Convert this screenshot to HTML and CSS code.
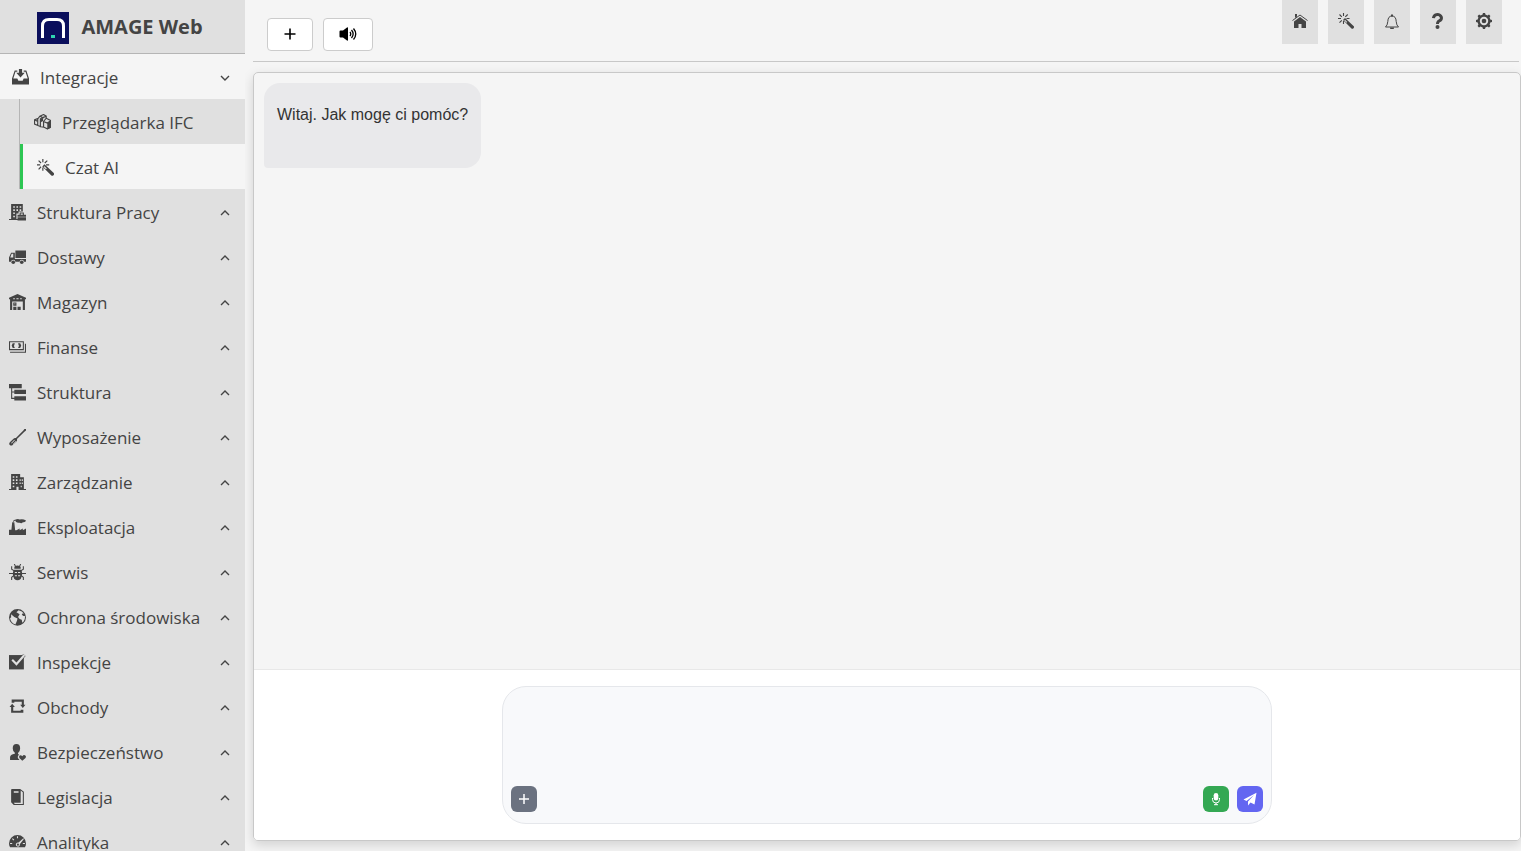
FILE: index.html
```html
<!DOCTYPE html>
<html lang="pl">
<head>
    <meta charset="UTF-8">
    <meta name="viewport" content="width=device-width, initial-scale=1.0">
    <title>AMAGE Web</title>
    <link rel="stylesheet" href="styles.css">
</head>
<body>
    <aside class="sidebar">
        <div class="brand">
            <svg class="brand-logo" viewBox="0 0 32 32">
                <rect width="32" height="32" fill="#0b0f5c"/>
                <path d="M5.500 26V14Q5.500 7.500 12 7.500H20Q26.500 7.500 26.500 14V26" fill="none" stroke="#fff" stroke-width="3"/>
                <rect x="14" y="23" width="4" height="3" fill="#2ed3b0"/>
            </svg>
            <span>AMAGE Web</span>
        </div>

        <nav class="menu">
            <button class="menu-item open" aria-expanded="true">
                <svg class="icon" viewBox="0 0 16 16"><path d="M6.500 0h3v3.500H12L8 8 4 3.500h2.500zM2.500 1.500H5v1H3.300L1.200 9H5l1 2h4l1-2h3.800L12.700 2.500H11v-1h2.500L16 9v5.500H0V9z"/></svg>
                <span>Integracje</span>
                <svg class="chevron" viewBox="0 0 10 10"><path d="M1 3l4 4 4-4"/></svg>
            </button>
            <div class="submenu">
                <a class="menu-item" href="#">
                    <svg class="icon" viewBox="0 0 16 16"><path d="M.5 5.500L4 4l1.500-2L9 .5l2.500 1.500v2l4 2v6.500l-3 1.500-3-1.500-3-.5-6-2.500zM.5 5.500L3.500 7v4M3.500 7V4.500M6 8V4.500L9 3v1M6 8v4.500M9 12.500V7l2.500-3M9 7l3.500 1.500 3-2M5.500 2L8.500 3.500l3-1.500" fill="none" stroke="currentColor" stroke-width="1.100"/><path d="M12.500 8.500l3-2v6.500l-3 1.500zM6 5l2.500-1.500v3L6 8z"/></svg>
                    <span>Przeglądarka IFC</span>
                </a>
                <a class="menu-item active" href="#">
                    <svg class="icon" viewBox="0 0 16 16"><path d="M7 5L5 7l8.500 8.500q1 .7 2-.3t.3-2zM7 6.800L9.200 9l-.7.700L6.300 7.500z" fill-rule="evenodd"/><path d="M5.500 0v3M5.500 8v3M0 5.500h3M8.500 5.500h3M1.500 1.500l2.300 2.300M9.700 1.500L7.300 3.800M1.500 9.700l2.300-2.400" fill="none" stroke="currentColor" stroke-width="1.100"/></svg>
                    <span>Czat AI</span>
                </a>
            </div>
            <button class="menu-item" aria-expanded="false">
                <svg class="icon" viewBox="0 0 16 16"><path d="M2 0h11v7H9v2H7v5h1v1H0v-1h2zM4 2v1.500h1.500V2zM7 2v1.500h1.500V2zM10 2v1.500h1.500V2zM4 5v1.500h1.500V5zM7 5v1.500h1.500V5zM10 5v1.500h1.500V5zM4 8v1.500h1.500V8zM4 11v1.500h1.500V11zM10 8h4v2h2v2H8v-2h2zM11 9v1h2V9zM8 12.500h8V15.500H8z" fill-rule="evenodd"/></svg>
                <span>Struktura Pracy</span>
                <svg class="chevron" viewBox="0 0 10 10"><path d="M1 7l4-4 4 4"/></svg>
            </button>
            <button class="menu-item" aria-expanded="false">
                <svg class="icon" viewBox="0 0 16 16"><path d="M6 1.500h10v7H6zM2 3.500h3.500V9.500H16V12h-2a2 2 0 0 0-4 0H6a2 2 0 0 0-4 0H0V8zM2.500 4.500L1.200 8H4V4.500z" fill-rule="evenodd"/><circle cx="4" cy="12.500" r="1.700"/><circle cx="12" cy="12.500" r="1.700"/></svg>
                <span>Dostawy</span>
                <svg class="chevron" viewBox="0 0 10 10"><path d="M1 7l4-4 4 4"/></svg>
            </button>
            <button class="menu-item" aria-expanded="false">
                <svg class="icon" viewBox="0 0 16 16"><path d="M8 0l8 3.500V5h-1v10h-2V7H3v8H1V5H0V3.500zM4 4v1h1.500V4zM7 4v1h2V4zM10.500 4v1H12V4zM4 8h3v3H4zM4 12h3v3H4zM8 12h3v3H8zM5 9v.7h1V9z" fill-rule="evenodd"/></svg>
                <span>Magazyn</span>
                <svg class="chevron" viewBox="0 0 10 10"><path d="M1 7l4-4 4 4"/></svg>
            </button>
            <button class="menu-item" aria-expanded="false">
                <svg class="icon" viewBox="0 0 16 16"><path d="M0 2h14v8.500H0zM1 3v6.500h12V3z" fill-rule="evenodd"/><path d="M5.500 4H3.500L2.500 6.200l1 2.300h2q-1.500-2.200 0-4.500zM8.500 4h2l1 2.200-1 2.300h-2q1.500-2.200 0-4.500z"/><path d="M1 12.500h14.500V4.500" fill="none" stroke="currentColor"/></svg>
                <span>Finanse</span>
                <svg class="chevron" viewBox="0 0 10 10"><path d="M1 7l4-4 4 4"/></svg>
            </button>
            <button class="menu-item" aria-expanded="false">
                <svg class="icon" viewBox="0 0 16 16"><path d="M0 0h12v4H3v3h2V5.500h11v4H5V8H3v5h2v-1.500h11v4H5V14H2V4H0z"/></svg>
                <span>Struktura</span>
                <svg class="chevron" viewBox="0 0 10 10"><path d="M1 7l4-4 4 4"/></svg>
            </button>
            <button class="menu-item" aria-expanded="false">
                <svg class="icon" viewBox="0 0 16 16"><path d="M16 0v1.500l-1.500 1L7.500 9.500q.5 2-1 3.200L3.500 15q-1.500 1-2.700 0t0-2.500L4 9.500Q5 8 6.500 8.500L13.500 1.500 14.500 0zM5 10.200l-3 3 .5.500 3-3zM6.500 11.300l-3 3 .5.200L7 12z" fill-rule="evenodd"/></svg>
                <span>Wyposażenie</span>
                <svg class="chevron" viewBox="0 0 10 10"><path d="M1 7l4-4 4 4"/></svg>
            </button>
            <button class="menu-item" aria-expanded="false">
                <svg class="icon" viewBox="0 0 16 16"><path d="M2 0h8.500v3H14v11h2v1H9v-3H7v3H0v-1h2zM3.500 2v1.500H5V2zM6.500 2v1.500H8V2zM3.500 5v1.500H5V5zM6.500 5v1.500H8V5zM3.500 8v1.500H5V8zM6.500 8v1.500H8V8zM10 5v1.500h1V5zM12 5v1.500h1V5zM10 8v1.500h1V8zM12 8v1.500h1V8zM3.500 11v1.500H5V11zM11 11v1.500h1V11z" fill-rule="evenodd"/></svg>
                <span>Zarządzanie</span>
                <svg class="chevron" viewBox="0 0 10 10"><path d="M1 7l4-4 4 4"/></svg>
            </button>
            <button class="menu-item" aria-expanded="false">
                <svg class="icon" viewBox="0 0 16 16"><path d="M3 3h2l.8 7.500H7L10 9v1.500L13 9v1.500L16 9v6H0v-5h2.300z"/><path d="M4 2.500Q4.500 1 7 1" fill="none" stroke="currentColor"/><path d="M6 1Q8-.5 10 .5q3-1 6 1-.5 2-3 1.500-1 1.500-3 .5Q6 4 6 1z"/></svg>
                <span>Eksploatacja</span>
                <svg class="chevron" viewBox="0 0 10 10"><path d="M1 7l4-4 4 4"/></svg>
            </button>
            <button class="menu-item" aria-expanded="false">
                <svg class="icon" viewBox="0 0 16 16"><path d="M5 3.500q0-2 3-2t3 2V4.500H5zM4.500 5.500h7Q13.500 10 11 14q-3 2.500-6 0Q2.500 10 4.500 5.500zM5.500 7.500v1h2v-1zM8.500 7.500v1h2v-1zM5.500 10.500v1h2v-1zM8.500 10.500v1h2v-1z" fill-rule="evenodd"/><path d="M6 2L5 0M10 2l1-2M5 6.500L2.500 5V2M11 6.500l2.500-1.500V2M4 9H0M12 9h4M4.500 11l-2 1.500V15M11.500 11l2 1.500V15" fill="none" stroke="currentColor"/></svg>
                <span>Serwis</span>
                <svg class="chevron" viewBox="0 0 10 10"><path d="M1 7l4-4 4 4"/></svg>
            </button>
            <button class="menu-item" aria-expanded="false">
                <svg class="icon" viewBox="0 0 16 16"><path d="M8 0a8 8 0 0 0-8 8 8 8 0 0 0 8 7.700A8 8 0 0 0 16 8a8 8 0 0 0-8-8zM9 1.200q3.500.5 5.200 3.300L13 4l-1 1.500 1.500 1L15 6.500q.4 4-2.500 6.500l-.5-3-2-.5-1.500-2L10 5 8.500 4 7 3zM2 5l3 2.500L8 9l-.5 2L6 14.700Q1.500 13 1 8.500L2 8z" fill-rule="evenodd"/></svg>
                <span>Ochrona środowiska</span>
                <svg class="chevron" viewBox="0 0 10 10"><path d="M1 7l4-4 4 4"/></svg>
            </button>
            <button class="menu-item" aria-expanded="false">
                <svg class="icon" viewBox="0 0 16 16"><path d="M0 1h14v13.500H0z"/><path class="check-edge" d="M3 5.500l4 4L14.500 1"/><path class="check" d="M3 5.500l4 4L14.500 1"/></svg>
                <span>Inspekcje</span>
                <svg class="chevron" viewBox="0 0 10 10"><path d="M1 7l4-4 4 4"/></svg>
            </button>
            <button class="menu-item" aria-expanded="false">
                <svg class="icon" viewBox="0 0 16 16"><path d="M2.500.5H14v5h1.500L13 8.500l-2.500-3H12v-3H5v1H2.500zM3 4.500l2.500 3H4v3.500h7v-1h2.500v3H2V7.500H.5z"/></svg>
                <span>Obchody</span>
                <svg class="chevron" viewBox="0 0 10 10"><path d="M1 7l4-4 4 4"/></svg>
            </button>
            <button class="menu-item" aria-expanded="false">
                <svg class="icon" viewBox="0 0 16 16"><path d="M7 0q3.500 0 3.500 4 0 3-2 4.500v1l1 .5q-2 1.500-.8 3.700L10 15H1v-2.500q0-2.500 4.500-3.300v-1Q3.500 7 3.500 4 3.500 0 7 0zM12.500 11.500q1.500-1.700 2.800-.6t0 2.400l-2.800 2.500-2.500-2.500q-1-1.500.1-2.400t2.400.6z"/></svg>
                <span>Bezpieczeństwo</span>
                <svg class="chevron" viewBox="0 0 10 10"><path d="M1 7l4-4 4 4"/></svg>
            </button>
            <button class="menu-item" aria-expanded="false">
                <svg class="icon" viewBox="0 0 16 16"><path d="M2 .5Q2 0 3 0h7.500L14 2.500V15H4.500L2 12.500zM11 1.500v11.500H4.500l1 1H13V3zM4.500 2v1.500H9V2z" fill-rule="evenodd"/></svg>
                <span>Legislacja</span>
                <svg class="chevron" viewBox="0 0 10 10"><path d="M1 7l4-4 4 4"/></svg>
            </button>
            <button class="menu-item" aria-expanded="false">
                <svg class="icon" viewBox="0 0 16 16"><path d="M8 1a8 8 0 0 1 8 8q0 2-1 3.500H1Q0 11 0 9a8 8 0 0 1 8-8zM7.500 2v2h1V2zM3.500 4l-.7.700L4.300 6l.7-.7zM1 8.500v1h2v-1zM13 8.500v1h2v-1zM13.500 4L9 8q-2-.5-2.500 1.500T8.500 12q2-.3 1.800-2.700L14 4.700z" fill-rule="evenodd"/><circle cx="8.400" cy="10" r="1"/></svg>
                <span>Analityka</span>
                <svg class="chevron" viewBox="0 0 10 10"><path d="M1 7l4-4 4 4"/></svg>
            </button>
        </nav>
    </aside>

    <main class="content">
        <header class="topbar">
            <div class="chat-tools">
                <button class="tool-btn" aria-label="Nowy czat">
                    <svg viewBox="0 0 16 16" width="16" height="16"><path d="M8 2.500v11M2.500 8h11" stroke="currentColor" stroke-width="1.600"/></svg>
                </button>
                <button class="tool-btn" aria-label="Dźwięk">
                    <svg viewBox="0 0 20 16" width="20" height="16"><path d="M1.500 5.500q0-1 1-1H5L9 1.500q1-.5 1 .5v12q0 1-1 .5l-4-3H2.500q-1 0-1-1z"/><path d="M12 6q1.500 2 0 4M13.500 4q3.300 4 0 8M15.500 2.500q4.500 5.500 0 11" fill="none" stroke="currentColor" stroke-width="1.300"/></svg>
                </button>
            </div>
            <div class="shortcuts">
                <button class="shortcut" aria-label="Start">
                    <svg class="icon" viewBox="0 0 16 16"><path d="M8 4l6 4.500V15H9.500v-4h-3v4H2V8.500z"/><path d="M.5 7.500L8 2l7.500 5.500" fill="none" stroke="currentColor"/><path d="M3 1h2v2.500L3 5z"/></svg>
                </button>
                <button class="shortcut" aria-label="Asystent">
                    <svg class="icon" viewBox="0 0 16 16"><path d="M7 5L5 7l8.500 8.500q1 .7 2-.3t.3-2zM7 6.800L9.200 9l-.7.700L6.300 7.500z" fill-rule="evenodd"/><path d="M5.500 0v3M5.500 8v3M0 5.500h3M8.500 5.500h3M1.500 1.500l2.300 2.300M9.700 1.500L7.300 3.800M1.500 9.700l2.300-2.400" fill="none" stroke="currentColor" stroke-width="1.100"/></svg>
                </button>
                <button class="shortcut" aria-label="Powiadomienia">
                    <svg class="icon" viewBox="0 0 16 16"><path d="M1.500 14q2-1.500 2.300-5.500Q4 3 8 3t4.200 5.500q.3 4 2.300 5.500z" fill="none" stroke="currentColor"/><path d="M7 1.500h2v2H7zM6 14.500h4q0 2-2 2t-2-2z"/></svg>
                </button>
                <button class="shortcut" aria-label="Pomoc">
                    <svg class="icon" viewBox="0 0 16 16"><path d="M9 11H6c0-3 1.600-4 2.700-4.600.4-.2.700-.4.900-.6.5-.5.3-1.200.2-1.400C9.500 3.700 8.800 3 7.500 3 5.400 3 5 4.900 5 5.300l-3-.4C2.200 3.200 3.700 0 7.500 0c2.300 0 4.300 1.300 5.100 3.200.7 1.700.4 3.500-.8 4.700-.5.500-1.100.8-1.600 1.100-.9.500-1.200 1-1.200 2z"/><circle cx="7.500" cy="14" r="2"/></svg>
                </button>
                <button class="shortcut" aria-label="Ustawienia">
                    <svg class="icon" viewBox="0 0 16 16"><path d="M16 9V7l-1.700-.6c-.2-.6-.4-1.200-.7-1.800l.8-1.600L13 1.600l-1.600.8c-.5-.3-1.100-.6-1.800-.7L9 0H7l-.6 1.700c-.6.2-1.200.4-1.700.7l-1.600-.8-1.500 1.500.8 1.600c-.3.500-.5 1.100-.7 1.700L0 7v2l1.700.6c.2.6.4 1.200.7 1.800L1.600 13 3 14.400l1.600-.8c.5.300 1.100.6 1.800.7L7 16h2l.6-1.700c.6-.2 1.200-.4 1.800-.7l1.600.8 1.400-1.400-.8-1.600c.3-.5.6-1.100.7-1.800zM8 12.200a4.200 4.200 0 1 1 0-8.400 4.200 4.200 0 0 1 0 8.400z" fill-rule="evenodd"/><circle cx="8" cy="8" r="2.300"/></svg>
                </button>
            </div>
        </header>

        <section class="chat">
            <div class="messages">
                <div class="message">
                    <p>Witaj. Jak mogę ci pomóc?</p>
                </div>
            </div>
            <form class="composer">
                <div class="input-box">
                    <textarea class="prompt" aria-label="Wiadomość"></textarea>
                    <div class="input-actions">
                        <button class="action attach" type="button" aria-label="Dodaj plik">
                            <svg viewBox="0 0 14 14" width="14" height="14"><path d="M7 2v10M2 7h10" stroke="currentColor" stroke-width="1.500"/></svg>
                        </button>
                        <button class="action mic" type="button" aria-label="Nagraj">
                            <svg viewBox="0 0 14 14" width="14" height="14"><rect x="4.700" y="1" width="4.600" height="7.500" rx="2.300"/><path d="M3.500 6v1.500a3.500 3.500 0 0 0 7 0V6M7 11v2M5 12.700h4" fill="none" stroke="currentColor"/></svg>
                        </button>
                        <button class="action send" type="submit" aria-label="Wyślij">
                            <svg viewBox="0 0 14 14" width="14" height="14"><path d="M13.500.8L11.500 12.500 7.500 10.500 5 13.500V9.500l6-6.500-7.500 6L.5 7.500z"/></svg>
                        </button>
                    </div>
                </div>
            </form>
        </section>
    </main>
</body>
</html>
```

FILE: styles.css
```css
* {
    box-sizing: border-box;
}

body {
    margin: 0;
    height: 100vh;
    display: flex;
    overflow: hidden;
    background-color: #f5f5f5;
    color: #444;
    font-family: 'Open Sans', sans-serif;
    font-size: 17px;
}

button {
    font: inherit;
    color: inherit;
    border: none;
    cursor: pointer;
}

svg {
    display: block;
    fill: currentColor;
}

.sidebar {
    width: 245px;
    flex-shrink: 0;
    background-color: #e0e0e0;
    overflow: hidden;
}

.brand {
    height: 54px;
    padding: 2px 5px 0 0;
    display: flex;
    align-items: center;
    justify-content: center;
    gap: 12px;
    border-bottom: 1px solid #b5b5b5;
    font-size: 20px;
    line-height: 30px;
    font-weight: 700;
}

.brand span {
    padding-bottom: 2px;
}

.brand-logo {
    width: 32px;
    height: 32px;
}

.menu {
    display: flex;
    flex-direction: column;
}

.menu-item {
    height: 45px;
    width: 100%;
    padding: 2px 15px 0 9px;
    display: flex;
    align-items: center;
    gap: 11px;
    background: none;
    color: inherit;
    text-align: left;
    text-decoration: none;
}

.menu-item span {
    flex: 1;
    white-space: nowrap;
}

.menu-item .icon {
    width: 17px;
    height: 17px;
}

.menu-item.open {
    background-color: #f5f5f5;
    padding-left: 12px;
}

.chevron {
    width: 10px;
    height: 10px;
    fill: none;
    stroke: currentColor;
    stroke-width: 1.4;
}

.check,
.check-edge {
    fill: none;
    stroke: #e0e0e0;
    stroke-width: 2;
}

.check-edge {
    stroke: #444;
    stroke-width: 3;
}

.submenu {
    margin-left: 19px;
    border-left: 1px solid #b5b5b5;
}

.submenu .menu-item {
    padding-left: 14px;
    gap: 11px;
}

.submenu .active {
    background-color: #f5f5f5;
    border-left: 3px solid #2dc653;
}

.content {
    flex: 1;
    min-width: 0;
    padding: 0 0 10px 8px;
    display: flex;
    flex-direction: column;
    gap: 10px;
    overflow: hidden;
}

.topbar {
    height: 62px;
    margin-right: 2px;
    padding: 0 17px 0 14px;
    display: flex;
    align-items: flex-start;
    justify-content: space-between;
    border-bottom: 1px solid #c8c8c8;
}

.chat-tools {
    display: flex;
    gap: 10px;
    padding-top: 18px;
}

.tool-btn {
    height: 33px;
    padding: 0 14px 2px;
    background-color: #fff;
    border: 1px solid #ccc;
    border-radius: 4px;
    color: #000;
}

.shortcuts {
    display: flex;
    gap: 10px;
}

.shortcut {
    width: 36px;
    height: 44px;
    padding: 0 10px 2px;
    background-color: #e0e0e0;
}

.shortcut .icon {
    width: 16px;
    height: 16px;
}

.chat {
    flex: 1;
    display: flex;
    flex-direction: column;
    border: 1px solid #c8c8c8;
    border-radius: 5px;
    box-shadow: 0 4px 12px rgba(0, 0, 0, 0.15);
    overflow: hidden;
}

.messages {
    flex: 1;
    padding: 10px;
    display: flex;
    align-items: flex-start;
}

.message {
    height: 85px;
    padding: 23px 13px;
    background-color: #e9e9eb;
    border-radius: 16px 16px 16px 4px;
    color: #333;
    font-family: 'Liberation Sans', Arial, sans-serif;
    font-size: 16px;
}

.message p {
    margin: 0;
}

.composer {
    padding: 16px;
    background-color: #fff;
    border-top: 1px solid #e8e8e8;
}

.input-box {
    max-width: 770px;
    height: 138px;
    margin: 0 auto;
    padding: 8px 8px 11px;
    display: flex;
    flex-direction: column;
    background-color: #f8f9fb;
    border: 1px solid #e5e7eb;
    border-radius: 24px;
}

.prompt {
    flex: 1;
    padding: 4px 8px;
    background: none;
    border: none;
    outline: none;
    resize: none;
    font-family: 'Liberation Sans', Arial, sans-serif;
    font-size: 16px;
}

.input-actions {
    display: flex;
    gap: 8px;
}

.action {
    width: 26px;
    height: 26px;
    padding: 6px;
    border-radius: 6px;
    color: #fff;
}

.attach {
    margin-right: auto;
    background-color: #6b7280;
}

.mic {
    background-color: #34a853;
}

.send {
    background-color: #6366f1;
}
```
